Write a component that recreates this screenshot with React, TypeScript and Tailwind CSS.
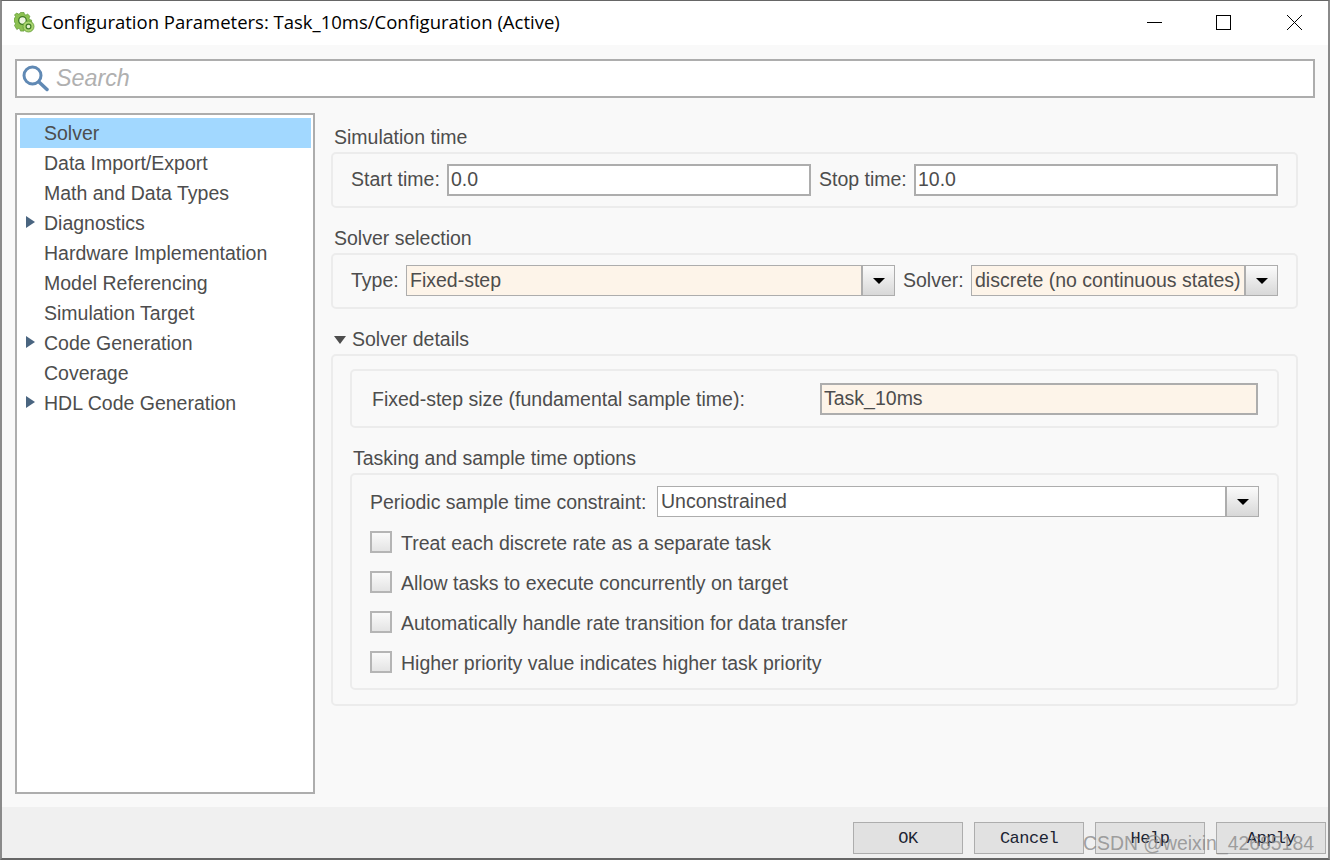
const treeItems = [
  { label: "Solver", selected: true },
  { label: "Data Import/Export" },
  { label: "Math and Data Types" },
  { label: "Diagnostics", arrow: true },
  { label: "Hardware Implementation" },
  { label: "Model Referencing" },
  { label: "Simulation Target" },
  { label: "Code Generation", arrow: true },
  { label: "Coverage" },
  { label: "HDL Code Generation", arrow: true },
];

const taskOptions = [
  "Treat each discrete rate as a separate task",
  "Allow tasks to execute concurrently on target",
  "Automatically handle rate transition for data transfer",
  "Higher priority value indicates higher task priority",
];

function GearIcon() {
  return (
    <svg width="21" height="21" viewBox="0 0 21 21" className="shrink-0">
      <path
        d="M6.500.5h3.500l.5 2 1.500.6 1.700-1 2.300 2.300-1 1.700.6 1.500 2 .5v3.400l-2 .5-.6 1.500 1 1.700-2.300 2.300-1.700-1-1.500.6-.5 2H6.500l-.5-2-1.500-.6-1.700 1L.5 13.500l1-1.700-.6-1.500-.9-.5V6.500l.9-.5.6-1.500-1-1.700L2.800 1.100l1.700 1 1.500-.6z"
        fill="#8cc152"
        stroke="#5f9a35"
        strokeWidth="0.7"
      />
      <circle cx="8.500" cy="8.500" r="3.800" fill="#eef6e2" stroke="#3f7a25" strokeWidth="1.300" />
      <circle cx="14.500" cy="14.500" r="5.500" fill="#a9d46f" stroke="#5f9a35" strokeWidth="0.8" />
      <circle cx="14.500" cy="14.500" r="2.400" fill="#e6f2d2" stroke="#3f7a25" strokeWidth="1.200" />
    </svg>
  );
}

function SearchIcon() {
  return (
    <svg width="27" height="27" viewBox="0 0 27 27" className="shrink-0">
      <circle cx="10.500" cy="10.500" r="8.500" fill="none" stroke="#6089b4" strokeWidth="3" />
      <path d="M17 17l8 7.500" stroke="#6089b4" strokeWidth="3.500" strokeLinecap="round" />
    </svg>
  );
}

function TextField({ value, className }: { value: string; className: string }) {
  return (
    <div className={`h-[32px] shrink-0 border-2 border-[#adadad] pl-[2px] leading-[27px] ${className}`}>
      {value}
    </div>
  );
}

function Combo({ value, tinted, className }: { value: string; tinted?: boolean; className: string }) {
  return (
    <div className={`flex h-[31px] shrink-0 border border-[#adadad] ${className}`}>
      <div className={`min-w-0 flex-1 whitespace-nowrap pl-[3px] leading-[29px] ${tinted ? "bg-[#fdf4e9]" : "bg-white"}`}>
        {value}
      </div>
      <div className="flex w-[33px] shrink-0 items-center justify-center border-l-2 border-[#adadad] bg-gradient-to-b from-[#fbfbfb] to-[#d8d8d8]">
        <div className="h-0 w-0 border-x-[6px] border-t-[6px] border-x-transparent border-t-black" />
      </div>
    </div>
  );
}

function FooterButton({ label }: { label: string }) {
  return (
    <button className="h-[32px] w-[110px] border border-[#adadad] bg-[#e1e1e1] pt-[2px] font-['Liberation_Mono',monospace] text-[17px] tracking-[-0.5px] text-[#1c2433]">
      {label}
    </button>
  );
}

export default function App() {
  return (
    <div className="relative flex h-[860px] w-[1330px] flex-col overflow-hidden border-x-2 border-t border-b-2 border-x-[#8a8a8a] border-t-[#666666] border-b-[#666666] bg-[#f9f9f9] font-['Liberation_Sans',Arial,sans-serif] text-[19.500px] text-[#4d4d4d]">
      {/* Title bar */}
      <div className="flex h-[44px] shrink-0 items-center bg-white pb-[2px] pl-[12px] pr-[25px]">
        <GearIcon />
        <span className="ml-[6px] font-['Open_Sans',sans-serif] text-[18.500px] text-black">
          Configuration Parameters: Task_10ms/Configuration (Active)
        </span>
        <svg width="156" height="16" viewBox="0 0 156 16" className="ml-auto mt-[2px]" fill="none" stroke="#000" strokeWidth="1">
          <path d="M0 7.500h15" />
          <rect x="69.500" y="0.500" width="14" height="14" />
          <path d="M140 0l15 15M155 0l-15 15" />
        </svg>
      </div>

      {/* Search */}
      <div className="mx-[13px] mt-[14px] flex h-[39px] shrink-0 items-center border-2 border-[#adadad] bg-white pl-[5px]">
        <SearchIcon />
        <span className="ml-[7px] text-[23.300px] italic text-[#b0b0b0]">Search</span>
      </div>

      <div className="flex min-h-0 flex-1 pt-[15px]">
        {/* Tree */}
        <div className="ml-[13px] h-[681px] w-[300px] shrink-0 border-2 border-[#adadad] bg-white pb-[3px] pl-[3px] pr-[2px] pt-[3px]">
          {treeItems.map((item) => (
            <div
              key={item.label}
              className={`relative h-[30px] pl-[24px] leading-[31px] ${item.selected ? "bg-[#a2d8ff]" : ""}`}
            >
              {item.arrow && (
                <div className="absolute left-[6px] top-[8px] h-0 w-0 border-y-[6px] border-l-[9px] border-y-transparent border-l-[#4a6580]" />
              )}
              {item.label}
            </div>
          ))}
        </div>

        {/* Right pane */}
        <div className="ml-[16px] w-[967px] shrink-0 pt-[13px]">
          <div className="pl-[3px] leading-[23px]">Simulation time</div>
          <div className="mt-[3px] flex h-[56px] items-center rounded-[5px] border-2 border-[#ececec] pl-[18px]">
            <span className="w-[96px] shrink-0 whitespace-nowrap">Start time:</span>
            <TextField value="0.0" className="w-[364px] bg-white" />
            <span className="ml-[8px] w-[95px] shrink-0 whitespace-nowrap">Stop time:</span>
            <TextField value="10.0" className="w-[364px] bg-white" />
          </div>

          <div className="mt-[19px] pl-[3px] leading-[23px]">Solver selection</div>
          <div className="mt-[3px] flex h-[56px] items-center rounded-[5px] border-2 border-[#ececec] pl-[18px]">
            <span className="w-[55px] shrink-0">Type:</span>
            <Combo value="Fixed-step" tinted className="-mt-[1px] w-[489px]" />
            <span className="ml-[8px] w-[68px] shrink-0">Solver:</span>
            <Combo value="discrete (no continuous states)" tinted className="-mt-[1px] w-[307px]" />
          </div>

          <div className="mt-[19px] flex items-center leading-[23px]">
            <div className="ml-[3px] h-0 w-0 border-x-[6px] border-t-[8px] border-x-transparent border-t-[#4d4d4d]" />
            <span className="ml-[6px]">Solver details</span>
          </div>
          <div className="mt-[3px] h-[352px] rounded-[5px] border-2 border-[#ececec] px-[17px] pt-[13px]">
            <div className="flex h-[59px] items-center rounded-[5px] border-2 border-[#ececec] pl-[20px]">
              <span className="w-[448px] shrink-0 pt-[2px]">Fixed-step size (fundamental sample time):</span>
              <TextField value="Task_10ms" className="w-[438px] bg-[#fdf4e9]" />
            </div>
            <div className="mt-[19px] pl-[3px] leading-[23px]">Tasking and sample time options</div>
            <div className="mt-[3px] h-[217px] rounded-[5px] border-2 border-[#ececec] pl-[18px] pt-[11px]">
              <div className="flex items-center">
                <span className="w-[287px] shrink-0 pt-[2px]">Periodic sample time constraint:</span>
                <Combo value="Unconstrained" className="w-[602px]" />
              </div>
              <div className="mt-[5px]">
                {taskOptions.map((option) => (
                  <label key={option} className="flex h-[40px] items-center">
                    <span className="h-[22px] w-[22px] shrink-0 border-2 border-[#b5b5b5] bg-gradient-to-b from-[#fafafa] to-[#e4e4e4]" />
                    <span className="ml-[9px] pt-[3px]">{option}</span>
                  </label>
                ))}
              </div>
            </div>
          </div>
        </div>
      </div>

      {/* Footer */}
      <div className="flex h-[51px] shrink-0 items-start justify-end gap-[11px] bg-[#f0f0f0] pr-[2px] pt-[15px]">
        <FooterButton label="OK" />
        <FooterButton label="Cancel" />
        <FooterButton label="Help" />
        <FooterButton label="Apply" />
      </div>

      {/* Watermark */}
      <span className="absolute left-[1081px] top-[828px] text-[19.400px] text-[#8a8a8a]/80">CSDN @weixin_42685184</span>
    </div>
  );
}
